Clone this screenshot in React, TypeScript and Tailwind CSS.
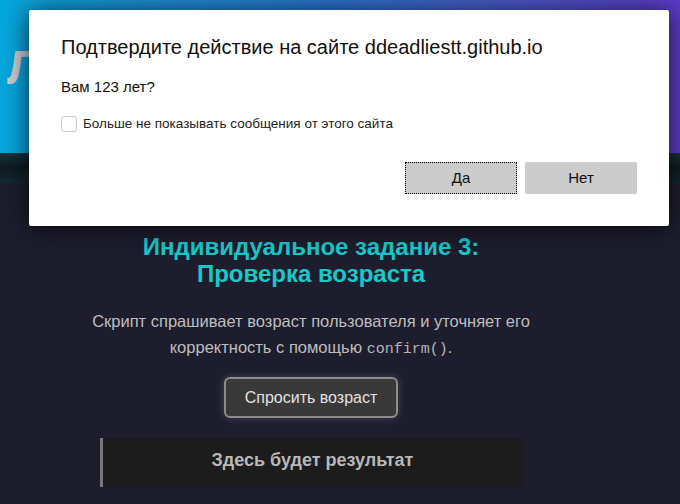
import React from "react";

export default function App() {
  return (
    <div
      className="relative w-[680px] h-[504px] overflow-hidden bg-[#1e1d2e]"
      style={{ fontFamily: '"Liberation Sans", Arial, sans-serif' }}
    >
      {/* Page header */}
      <header className="h-[153px] bg-gradient-to-r from-[#03a7dc] via-[#2b74cf] to-[#5b3ac9] pl-[7px] pt-[44px]">
        <h1 className="text-[48px] leading-none font-bold text-[#cacaca] whitespace-nowrap">
          Лабораторная работа 4
        </h1>
      </header>
      <nav className="h-[30px] bg-gradient-to-b from-[#17343b] via-[#0f1b21] to-[#132a31]" />

      {/* Main content */}
      <main className="w-[622px] flex flex-col items-center">
        <h2 className="mt-[50px] text-[24px] leading-[27px] font-bold text-[#16c9cb] text-center">
          Индивидуальное задание 3:
          <br />
          Проверка возраста
        </h2>
        <p className="mt-[21px] w-[470px] text-[16.5px] leading-[26px] text-[#bdbdbd] text-center">
          Скрипт спрашивает возраст пользователя и уточняет его корректность с помощью{" "}
          <code
            className="text-[15px] text-[#b5b5b5]"
            style={{ fontFamily: '"Liberation Mono", "Courier New", monospace' }}
          >
            confirm()
          </code>
          .
        </p>
        <button className="mt-[14px] h-[41px] px-[19px] rounded-[6px] border-2 border-[#8c8c8c] bg-[#393939] text-[16px] leading-[24px] text-[#e2e2e2] shadow-[0_0_8px_rgba(255,255,255,0.18)]">
          Спросить возраст
        </button>
        <div className="mt-[20px] w-[423px] h-[49px] border-l-[3px] border-[#787878] bg-[#1c1c1c] pt-[11px] text-center">
          <span className="text-[18px] leading-[22px] font-bold text-[#b8b8b8]">Здесь будет результат</span>
        </div>
      </main>

      {/* Confirm dialog */}
      <div className="absolute left-[29px] top-[10px] w-[640px] h-[216px] bg-white rounded-[2px] shadow-[0_2px_24px_rgba(0,0,0,0.75)] px-[32px] pt-[25px] flex flex-col">
        <div className="text-[20px] leading-[24px] text-[#111] whitespace-nowrap">
          Подтвердите действие на сайте ddeadliestt.github.io
        </div>
        <div className="mt-[18px] text-[15px] leading-[20px] text-[#111]">Вам 123 лет?</div>
        <label className="mt-[19px] flex items-center h-[16px]">
          <span className="w-[16px] h-[16px] rounded-[3px] border border-[#c8c8c8] bg-white shrink-0" />
          <span className="ml-[6px] text-[13.5px] leading-[16px] text-[#222] whitespace-nowrap">
            Больше не показывать сообщения от этого сайта
          </span>
        </label>
        <div className="mt-[30px] flex justify-end gap-[8px]">
          <button className="w-[112px] h-[32px] bg-[#cccccc] border border-dotted border-black text-[15px] text-[#111]">
            Да
          </button>
          <button className="w-[112px] h-[32px] bg-[#cccccc] rounded-[2px] text-[15px] text-[#111]">
            Нет
          </button>
        </div>
      </div>
    </div>
  );
}
